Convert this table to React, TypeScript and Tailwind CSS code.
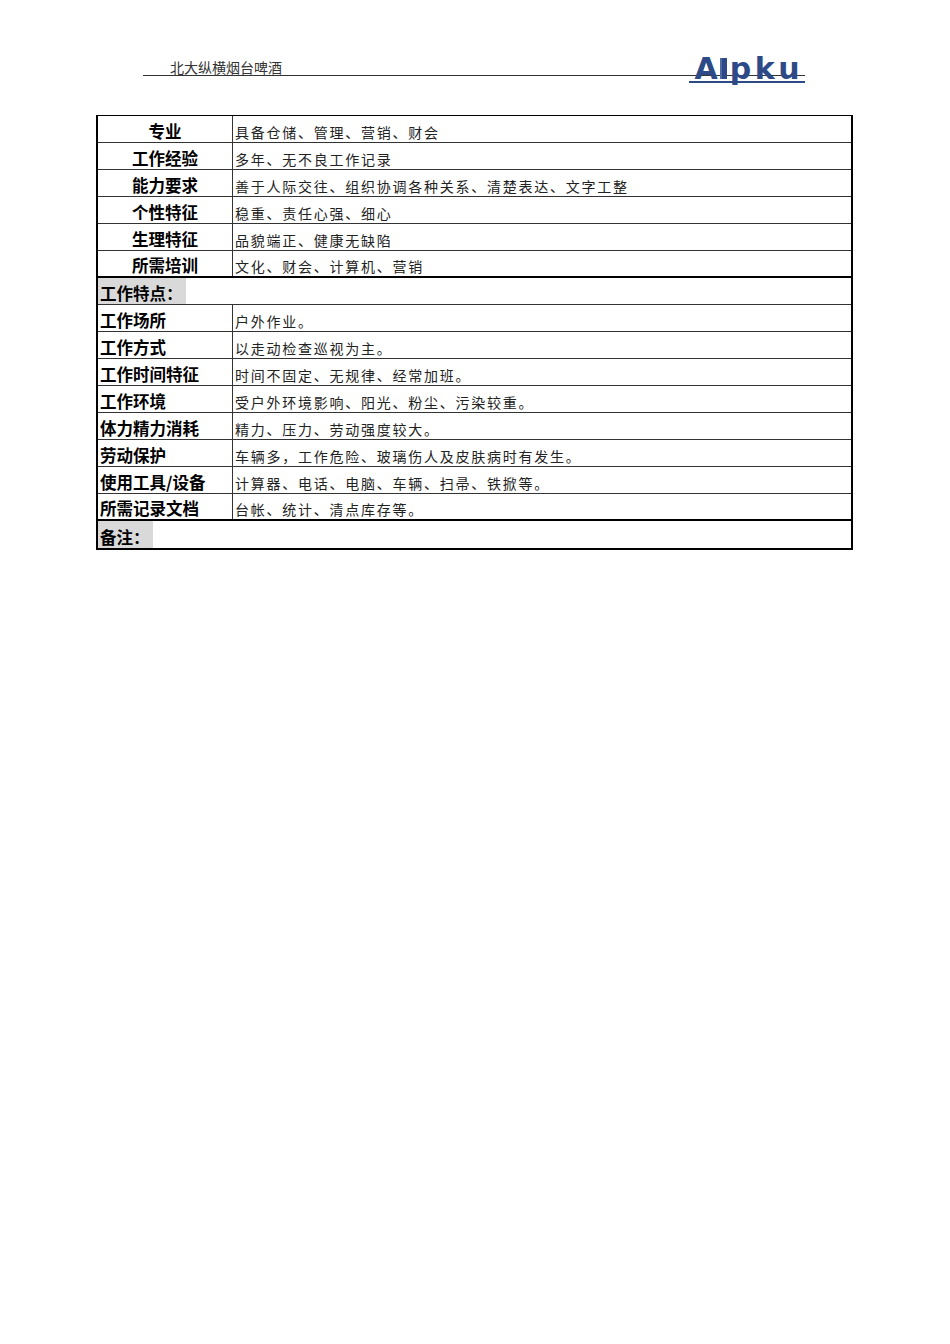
const cjk = { fontFamily: '"Noto Sans CJK SC", "Liberation Sans", sans-serif' };
const logoFont = { fontFamily: '"DejaVu Sans", "Liberation Sans", sans-serif' };

const topRows = [
  { label: "专业", value: "具备仓储、管理、营销、财会" },
  { label: "工作经验", value: "多年、无不良工作记录" },
  { label: "能力要求", value: "善于人际交往、组织协调各种关系、清楚表达、文字工整" },
  { label: "个性特征", value: "稳重、责任心强、细心" },
  { label: "生理特征", value: "品貌端正、健康无缺陷" },
  { label: "所需培训", value: "文化、财会、计算机、营销" },
];

const workRows = [
  { label: "工作场所", value: "户外作业。" },
  { label: "工作方式", value: "以走动检查巡视为主。" },
  { label: "工作时间特征", value: "时间不固定、无规律、经常加班。" },
  { label: "工作环境", value: "受户外环境影响、阳光、粉尘、污染较重。" },
  { label: "体力精力消耗", value: "精力、压力、劳动强度较大。" },
  { label: "劳动保护", value: "车辆多，工作危险、玻璃伤人及皮肤病时有发生。" },
  { label: "使用工具/设备", value: "计算器、电话、电脑、车辆、扫帚、铁掀等。" },
  { label: "所需记录文档", value: "台帐、统计、清点库存等。" },
];

function Row({
  label,
  value,
  centered,
  thick,
}: {
  label: string;
  value: string;
  centered?: boolean;
  thick?: boolean;
}) {
  return (
    <div
      className={`flex h-[27px] ${thick ? "border-b-2 border-black" : "border-b border-[#333]"}`}
    >
      <div
        className={`w-[135px] shrink-0 border-r border-[#333] flex items-end pb-[3px] ${
          centered ? "justify-center" : "pl-[2px]"
        }`}
      >
        <span className="text-[16.5px] leading-none font-bold text-black">{label}</span>
      </div>
      <div className="flex-1 flex items-end pb-[3px] pl-[2px]">
        <span className="text-[14px] leading-none tracking-[1.75px] text-[#222]">{value}</span>
      </div>
    </div>
  );
}

function SectionRow({ label, last }: { label: string; last?: boolean }) {
  return (
    <div className={`flex h-[27px] ${last ? "" : "border-b border-[#333]"}`}>
      <div className="h-full bg-[#d9d9d9] flex items-end pb-[3px] pl-[2px] pr-[3px]">
        <span className="text-[16.5px] leading-none font-bold text-black">{label}</span>
      </div>
    </div>
  );
}

function Logo() {
  return (
    <div className="flex flex-col items-end -mb-[8px]">
      <div className="flex items-baseline text-[#2d4a87] leading-none pr-[2px]" style={logoFont}>
        <span className="text-[30px] leading-none font-bold">A</span>
        <div className="w-[7px] h-[21px] bg-[#2d4a87] ml-[2px] mr-[3px] border-l-2 border-[#4f6aa0]" />
        <span className="text-[30px] leading-none font-bold tracking-[3.5px]">pku</span>
      </div>
      <div className="w-[116px] h-[2px] bg-[#2d4a87] -mt-[3px]" />
    </div>
  );
}

export default function App() {
  return (
    <div className="w-[950px] h-[1344px] bg-white overflow-hidden" style={cjk}>
      {/* Header */}
      <div className="ml-[143px] w-[662px] mt-[51px] h-[25px] flex items-end justify-between border-b border-[#333]">
        <span className="ml-[27px] mb-[1px] text-[14px] leading-none text-[#333]">北大纵横烟台啤酒</span>
        <Logo />
      </div>

      {/* Table */}
      <div className="ml-[96px] mt-[39px] w-[757px] border-t border-x-2 border-b-2 border-black">
        {topRows.map((r, i) => (
          <Row key={r.label} label={r.label} value={r.value} centered thick={i === topRows.length - 1} />
        ))}
        <SectionRow label="工作特点：" />
        {workRows.map((r, i) => (
          <Row key={r.label} label={r.label} value={r.value} thick={i === workRows.length - 1} />
        ))}
        <SectionRow label="备注：" last />
      </div>
    </div>
  );
}
